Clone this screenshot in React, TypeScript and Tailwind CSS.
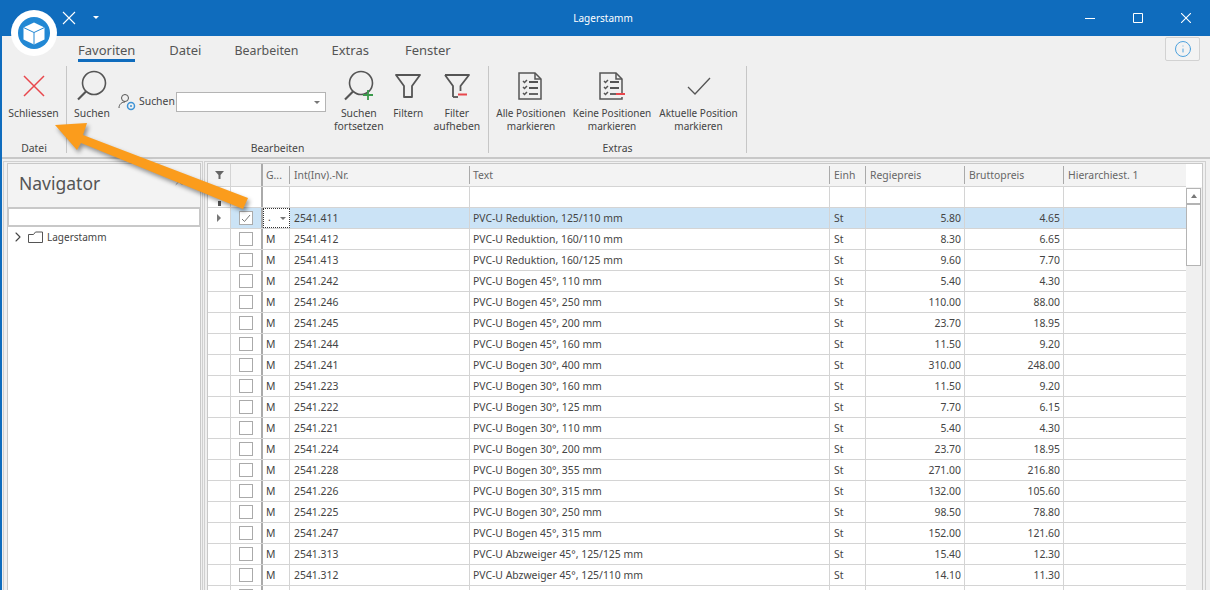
import { ChevronDown, ChevronRight, Info } from 'lucide-react'

const rows = [
  ['2541.411', 'PVC-U Reduktion, 125/110 mm', '5.80', '4.65'],
  ['2541.412', 'PVC-U Reduktion, 160/110 mm', '8.30', '6.65'],
  ['2541.413', 'PVC-U Reduktion, 160/125 mm', '9.60', '7.70'],
  ['2541.242', 'PVC-U Bogen 45°, 110 mm', '5.40', '4.30'],
  ['2541.246', 'PVC-U Bogen 45°, 250 mm', '110.00', '88.00'],
  ['2541.245', 'PVC-U Bogen 45°, 200 mm', '23.70', '18.95'],
  ['2541.244', 'PVC-U Bogen 45°, 160 mm', '11.50', '9.20'],
  ['2541.241', 'PVC-U Bogen 30°, 400 mm', '310.00', '248.00'],
  ['2541.223', 'PVC-U Bogen 30°, 160 mm', '11.50', '9.20'],
  ['2541.222', 'PVC-U Bogen 30°, 125 mm', '7.70', '6.15'],
  ['2541.221', 'PVC-U Bogen 30°, 110 mm', '5.40', '4.30'],
  ['2541.224', 'PVC-U Bogen 30°, 200 mm', '23.70', '18.95'],
  ['2541.228', 'PVC-U Bogen 30°, 355 mm', '271.00', '216.80'],
  ['2541.226', 'PVC-U Bogen 30°, 315 mm', '132.00', '105.60'],
  ['2541.225', 'PVC-U Bogen 30°, 250 mm', '98.50', '78.80'],
  ['2541.247', 'PVC-U Bogen 45°, 315 mm', '152.00', '121.60'],
  ['2541.313', 'PVC-U Abzweiger 45°, 125/125 mm', '15.40', '12.30'],
  ['2541.312', 'PVC-U Abzweiger 45°, 125/110 mm', '14.10', '11.30'],
  ['', '', '', ''],
]

const cols = 'grid grid-cols-[23px_32px_27px_180px_360px_36px_99px_99px_122px]'
const cell = 'border-r border-[#d4d4d4] pl-[4px] pr-[3px] pt-[1px] flex items-center whitespace-nowrap overflow-hidden'
const head = 'flex items-center pl-[4px] pt-[1px] border-r border-[#aaa] my-[2px] whitespace-nowrap overflow-hidden'

function RibbonButton({ icon, label, className, small }: { icon: React.ReactNode; label: string; className?: string; small?: boolean }) {
  return (
    <div className={`flex flex-col items-center shrink-0 ${className ?? ''}`}>
      <div className="h-[40px] flex items-center justify-center">{icon}</div>
      <div className={`text-center leading-[13px] mt-[1px] whitespace-pre ${small ? 'text-[10px]' : ''}`}>{label}</div>
    </div>
  )
}

function SearchIcon({ plus }: { plus?: boolean }) {
  return (
    <svg width="32" height="32" viewBox="0 0 32 32" fill="none" stroke="#555" strokeWidth="1.600">
      <circle cx="18" cy="13" r="11.500" />
      <path d="M10 21.500 L2 29.500" strokeWidth="2.200" />
      {plus && <path d="M25 20v10M20 25h10" stroke="#3a9a4b" strokeWidth="1.800" />}
    </svg>
  )
}

function FunnelIcon({ minus }: { minus?: boolean }) {
  return (
    <svg width="26" height="26" viewBox="0 0 26 26" fill="none" stroke="#555" strokeWidth="1.800" strokeLinejoin="round">
      {minus ? (
        <path d="M1 2h24L16.500 13v5M9 24V13L1 2" />
      ) : (
        <path d="M1 2h24L17 13v11H9V13z" />
      )}
      {minus && <path d="M9 24h5" />}
      {minus && <path d="M14 21.500h9" stroke="#e8474c" strokeWidth="2" />}
    </svg>
  )
}

function ListIcon({ minus }: { minus?: boolean }) {
  return (
    <svg width="26" height="28" viewBox="0 0 26 28" fill="none" stroke="#555" strokeWidth="1.500">
      <path d={minus ? 'M23 21V7l-6-6H1v26h22v-2' : 'M1 1h16l6 6v20H1z'} />
      <path d="M17 1v6h6" />
      <path d="M5 9l1.500 1.500L9 8M5 15l1.500 1.500L9 14M5 21l1.500 1.500L9 20" />
      <path d="M11 10h9M11 16h9" strokeWidth="1.800" />
      {!minus && <path d="M11 22h9" strokeWidth="1.800" />}
      {minus && <path d="M11 22h6" strokeWidth="1.800" />}
      {minus && <path d="M17 22h9" stroke="#e8474c" strokeWidth="2" />}
    </svg>
  )
}

function Group({ label, className, children }: { label: string; className: string; children: React.ReactNode }) {
  return (
    <div className={`flex flex-col shrink-0 h-[87px] border-r border-[#c6c6c6] ${className}`}>
      <div className="flex-1 flex items-start relative">{children}</div>
      <div className="text-center leading-[14px] text-[#444] -mb-[2px]">{label}</div>
    </div>
  )
}

export default function App() {
  return (
    <div className="relative w-[1210px] h-[590px] overflow-hidden bg-[#f0f0f0] text-[10.4px] text-[#444] font-['Noto_Sans',sans-serif] border-l-2 border-[#0f6cbd]">
      {/* titlebar */}
      <div className="h-[36px] -ml-[2px] bg-[#0f6cbd] text-white flex items-center relative">
        <svg className="ml-[62px] -mt-[1px]" width="14" height="14" viewBox="0 0 14 14" stroke="white" strokeWidth="1.100"><path d="M1 1l12 12M13 1L1 13" /></svg>
        <div className="ml-[17px] -mt-[2px] w-0 h-0 border-x-[3px] border-x-transparent border-t-[3px] border-t-white" />
        <div className="flex-1 text-center text-[10px] pl-[22px]">Lagerstamm</div>
        <svg className="mr-[38px]" width="10" height="10" viewBox="0 0 10 10" stroke="white" strokeWidth="1"><path d="M0 5.500h10" /></svg>
        <svg className="mr-[38px]" width="10" height="10" viewBox="0 0 10 10" fill="none" stroke="white" strokeWidth="1"><path d="M.5 .5h9v9h-9z" /></svg>
        <svg className="mr-[19px]" width="10" height="10" viewBox="0 0 10 10" stroke="white" strokeWidth="1.100"><path d="M0 0l10 10M10 0L0 10" /></svg>
      </div>

      {/* tabs */}
      <div className="h-[26px] flex items-start pl-[76px] text-[13px] text-[#555] relative">
        <div className="border-b-[3px] border-[#0f6cbd] h-[26px] leading-[28px]">Favoriten</div>
        <div className="ml-[34px] leading-[28px]">Datei</div>
        <div className="ml-[33px] pt-[1px] leading-[28px] text-[12.400px]">Bearbeiten</div>
        <div className="ml-[33px] leading-[28px]">Extras</div>
        <div className="ml-[36px] leading-[28px]">Fenster</div>
        <div className="absolute right-[10px] top-[1px] w-[35px] h-[24px] border border-[#d2d2d2] rounded-[2px] bg-[#f3f3f3] flex items-center justify-center">
          <Info size={18} strokeWidth={1.300} className="text-[#4a9fdc]" />
        </div>
      </div>

      {/* ribbon */}
      <div className="h-[97px] -ml-[2px] pl-[2px] pt-[4px] flex border-b-2 border-[#c8c8c8]">
        <Group label="Datei" className="w-[65px]">
          <RibbonButton className="w-[63px]" label="Schliessen" icon={
            <svg width="22" height="22" viewBox="0 0 22 22" stroke="#e8474c" strokeWidth="1.500"><path d="M1 1l20 20M21 1L1 21" /></svg>
          } />
        </Group>
        <Group label="Bearbeiten" className="w-[422px]">
          <RibbonButton className="w-[50px]" label="Suchen" icon={<SearchIcon />} />
          <div className="flex items-center mt-[26px] ml-[1px]">
            <svg width="18" height="18" viewBox="0 0 18 18" fill="none" stroke="#555" strokeWidth="1">
              <circle cx="7" cy="5" r="3.500" />
              <path d="M1 15c0-4 3-6 6-6" />
              <circle cx="13" cy="13" r="3.500" stroke="#3d93d6" strokeWidth="1.500" />
              <circle cx="13" cy="13" r="1" fill="#3d93d6" stroke="none" />
            </svg>
            <span className="ml-[3px]">Suchen</span>
            <div className="ml-[1px] w-[150px] h-[20px] bg-white border border-[#b4b4b4] flex items-center justify-end pr-[5px]">
              <div className="w-0 h-0 border-x-[3px] border-x-transparent border-t-[3px] border-t-[#777]" />
            </div>
          </div>
          <RibbonButton className="w-[50px] ml-[8px]" label={'Suchen\nfortsetzen'} icon={<SearchIcon plus />} />
          <RibbonButton className="w-[49px]" label="Filtern" small icon={<FunnelIcon />} />
          <RibbonButton className="w-[48px]" label={'Filter\naufheben'} icon={<FunnelIcon minus />} />
        </Group>
        <Group label="Extras" className="w-[258px]">
          <RibbonButton className="w-[84px]" small label={'Alle Positionen\nmarkieren'} icon={<ListIcon />} />
          <RibbonButton className="w-[78px]" small label={'Keine Positionen\nmarkieren'} icon={<ListIcon minus />} />
          <RibbonButton className="w-[95px]" small label={'Aktuelle Position\nmarkieren'} icon={
            <svg width="24" height="20" viewBox="0 0 24 20" fill="none" stroke="#555" strokeWidth="1.300"><path d="M1 11l7 7L23 2" /></svg>
          } />
        </Group>
      </div>

      {/* body */}
      <div className="flex pl-[1px] pt-[2px] gap-[1px]">
        <div className="w-[200px] h-[440px] border border-[#d0d0d0] pl-[3px] pr-[1px] pt-[1px] shrink-0">
          <div className="h-full border border-[#c8c8c8] bg-white">
            <div className="h-[43px] bg-[#f3f3f3] flex items-center justify-between pl-[11px] pr-[15px] pb-[5px] text-[17.500px] text-[#555]">
              <span>Navigator</span>
              <ChevronDown size={12} className="rotate-180 text-[#999]" />
            </div>
            <div className="h-[20px] border-y-2 border-x border-[#c8c8c8] bg-white" />
            <div className="flex items-center h-[20px] pl-[2px]">
              <ChevronRight size={16} strokeWidth={1.600} className="text-[#444]" />
              <svg className="ml-[2px]" width="15" height="12" viewBox="0 0 15 12" fill="none" stroke="#555" strokeWidth="1">
                <path d="M.5 11.500V3.500h5l2-2.500h7v10.500z" />
              </svg>
              <span className="ml-[4px] text-[10px]">Lagerstamm</span>
            </div>
          </div>
        </div>

        <div className="w-[1002px] h-[440px] border border-[#d0d0d0] px-[2px] pt-[1px] shrink-0">
          <div className="h-full border border-[#c8c8c8] bg-white">
            <div className="flex h-full">
              <div className="flex-1 min-w-0">
                {/* header */}
                <div className={`${cols} h-[23px] bg-[#f3f3f3] text-[#666] border-b border-[#d4d4d4]`}>
                  <div className="flex items-center justify-center border-r border-[#d4d4d4]">
                    <svg width="9" height="8" viewBox="0 0 9 8" fill="#666"><path d="M0 0h9L5.500 4v4h-2V4z" /></svg>
                  </div>
                  <div className="border-r-[2px] border-[#aaa]" />
                  <div className="flex items-center pl-[3px] pt-[1px] border-r border-[#aaa] my-[2px] whitespace-nowrap overflow-hidden">G...</div>
                  <div className={head}>Int(Inv).-Nr.</div>
                  <div className="flex items-center pl-[3px] pt-[1px] border-r border-[#aaa] my-[2px]">Text</div>
                  <div className={head}>Einh</div>
                  <div className={head}>Regiepreis</div>
                  <div className={head}>Bruttopreis</div>
                  <div className="flex items-center pl-[4px] pt-[1px]">Hierarchiest. 1</div>
                </div>
                {/* filter row */}
                <div className={`${cols} h-[21px] border-b border-[#d4d4d4]`}>
                  <div className="border-r border-[#d4d4d4] flex items-end justify-center pb-[1px]">
                    <div className="w-[3px] h-[5px] bg-[#555]" />
                  </div>
                  <div className="border-r-[2px] border-[#aaa]" />
                  <div className={cell} />
                  <div className={cell} />
                  <div className={cell} />
                  <div className={cell} />
                  <div className={cell} />
                  <div className={cell} />
                  <div />
                </div>
                {rows.map((r, i) => {
                  const active = i === 0
                  const bg = active ? 'bg-[#cbe3f6]' : ''
                  return (
                    <div key={i} className={`${cols} h-[21px] border-b border-[#d4d4d4]`}>
                      <div className="border-r border-[#d4d4d4] flex items-center justify-center">
                        {active && <div className="w-0 h-0 border-y-[4px] border-y-transparent border-l-[4px] border-l-[#777]" />}
                      </div>
                      <div className={`border-r-[2px] border-[#aaa] flex items-center justify-center ${bg}`}>
                        <div className="w-[14px] h-[14px] border border-[#aaa] bg-white flex items-center justify-center">
                          {active && (
                            <svg width="10" height="9" viewBox="0 0 10 9" fill="none" stroke="#777" strokeWidth="1"><path d="M1 5l2.500 2.500L9 1" /></svg>
                          )}
                        </div>
                      </div>
                      {active ? (
                        <div className="border border-dotted border-[#333] flex items-center justify-between pl-[4px] pr-[3px] bg-white">
                          <span>.</span>
                          <div className="w-0 h-0 border-x-[3px] border-x-transparent border-t-[3px] border-t-[#777]" />
                        </div>
                      ) : (
                        <div className="border-r border-[#d4d4d4] pl-[3px] pt-[1px] flex items-center">{r[0] ? 'M' : ''}</div>
                      )}
                      <div className={`${cell} ${bg}`}>{r[0]}</div>
                      <div className={`border-r border-[#d4d4d4] pl-[3px] pt-[1px] flex items-center whitespace-nowrap ${bg}`}>{r[1]}</div>
                      <div className={`${cell} ${bg}`}>{r[0] ? 'St' : ''}</div>
                      <div className={`${cell} justify-end ${bg}`}>{r[2]}</div>
                      <div className={`${cell} justify-end ${bg}`}>{r[3]}</div>
                      <div className={bg} />
                    </div>
                  )
                })}
              </div>
              {/* scrollbar */}
              <div className="w-[16px] shrink-0 bg-[#f0f0f0] mt-[23px] pr-[1px] pt-[1px]">
                <div className="h-[16px] bg-white border border-[#b4b4b4] flex items-center justify-center">
                  <div className="w-0 h-0 border-x-[3px] border-x-transparent border-b-[4px] border-b-[#777]" />
                </div>
                <div className="h-[62px] bg-white border border-[#b4b4b4]" />
              </div>
            </div>
          </div>
        </div>
      </div>

      {/* logo */}
      <div className="absolute -left-[2px] top-0 ml-[11px] mt-[10px] w-[46px] h-[46px] rounded-full bg-white flex items-center justify-center">
        <div className="w-[32px] h-[32px] rounded-full bg-[#2288d4] flex items-center justify-center">
          <svg width="22" height="23" viewBox="0 0 22 23" fill="white" stroke="#2288d4" strokeWidth="1">
            <path d="M11 .5L21.500 5.500V17.500L11 22.500L.5 17.500V5.500z" stroke="none" />
            <path d="M.5 5.500L11 10.500L21.500 5.500M11 10.500V22.500" fill="none" />
          </svg>
        </div>
      </div>

      {/* arrow */}
      <svg className="absolute -left-[2px] top-0 pointer-events-none drop-shadow-[2px_3px_2px_rgba(0,0,0,0.4)]" width="300" height="230" viewBox="0 0 300 230">
        <polygon points="55,125 87,123 83,135 248,198 243,209 81,143 77,150" fill="#fb9c1c" />
      </svg>
    </div>
  )
}
